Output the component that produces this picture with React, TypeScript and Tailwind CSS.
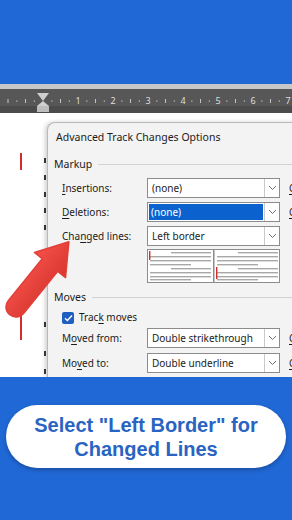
import React from "react";

const ui = { fontFamily: '"Noto Sans", "Open Sans", sans-serif' };
const pill = { fontFamily: '"Liberation Sans", Arial, sans-serif' };

function Chevron() {
  return (
    <svg width="9" height="6" viewBox="0 0 9 6">
      <path d="M1 1 L4.5 4.5 L8 1" fill="none" stroke="#6f6f6f" strokeWidth="1" />
    </svg>
  );
}

function Select({ value, active }: { value: string; active?: boolean }) {
  return (
    <div className="flex h-[20px] w-[133px] shrink-0 items-stretch border border-[#8c8c8c] bg-white">
      <div className="flex flex-1 items-stretch p-[1px]">
        <span
          className={
            active
              ? "flex w-full items-center bg-[#0b62cf] pl-[2px] text-white"
              : "flex items-center pl-[3px] text-[#1b1b1b]"
          }
        >
          {value}
        </span>
      </div>
      <div className="flex w-[15px] items-center justify-center border-l border-[#c9c9c9]">
        <Chevron />
      </div>
    </div>
  );
}

function Label({ pre, u, post }: { pre: string; u: string; post: string }) {
  return (
    <span className="w-[85px] shrink-0 text-[#1b1b1b]">
      {pre}
      <span className="underline underline-offset-2">{u}</span>
      {post}
    </span>
  );
}

function Row(props: { pre: string; u: string; post: string; value: string; active?: boolean; color?: boolean }) {
  return (
    <div className="flex h-[20px] items-center pl-[14px]">
      <Label pre={props.pre} u={props.u} post={props.post} />
      <Select value={props.value} active={props.active} />
      {props.color && (
        <span className="ml-[9px] text-[#1b1b1b]">
          <span className="underline underline-offset-2">C</span>olor:
        </span>
      )}
    </div>
  );
}

function Group({ title }: { title: string }) {
  return (
    <div className="flex h-[24px] items-center gap-[6px] pl-[6px]">
      <span className="text-[10.5px] text-[#1b1b1b]">{title}</span>
      <div className="mt-[-2px] h-px flex-1 bg-[#d2d2d2]" />
    </div>
  );
}

function Ruler() {
  const marks = [];
  for (let k = -4; k <= 28; k++) {
    const x = 43 + 8.75 * k;
    if (k === 0) continue;
    const m = ((k % 4) + 4) % 4;
    if (m === 0 && k > 0) {
      marks.push(
        <text key={k} x={x} y={15} fontSize="9" textAnchor="middle" fill="#dedede" style={ui}>
          {k / 4}
        </text>
      );
    } else if (m === 0 || m === 2) {
      marks.push(<rect key={k} x={x - 0.5} y={10} width={1} height={4} fill="#c4c4c4" />);
    } else {
      marks.push(<rect key={k} x={x - 0.5} y={11.5} width={1.2} height={1.2} fill="#c4c4c4" />);
    }
  }
  return (
    <svg width="292" height="24" viewBox="0 0 292 24" className="block">
      <rect width="292" height="24" fill="#575757" />
      <rect y="17" width="292" height="7" fill="#4b4b4b" />
      {marks}
      <path d="M37 4 H49 L43 12 Z" fill="#cfcfcf" />
      <path d="M43 12 L49 17 H37 Z" fill="#cfcfcf" />
      <rect x="37" y="17" width="12" height="6" fill="#bdbdbd" />
    </svg>
  );
}

function Margin() {
  const frags = [45, 62, 79, 95, 112, 209, 238, 256];
  return (
    <svg width="47" height="264" viewBox="0 0 47 264" className="block shrink-0">
      <rect x="20" y="40" width="2" height="17" fill="#d22c2c" />
      <rect x="20" y="177" width="2" height="50" fill="#d22c2c" />
      {frags.map((y) => (
        <rect key={y} x="44" y={y} width="2" height="5" fill="#3a3a3a" />
      ))}
    </svg>
  );
}

function Preview() {
  const line = (x1: number, x2: number, y: number, k: string) => (
    <rect key={k} x={x1} y={y} width={x2 - x1} height={1.4} fill="#a8a8a8" />
  );
  const pane = (ox: number, barTop: boolean) => (
    <g transform={`translate(${ox},0)`}>
      {line(24, 64, 3, "a")}
      {line(3, 64, 7, "b")}
      {line(3, 64, 11, "c")}
      {line(3, 44, 15, "d")}
      {line(24, 64, 19, "e")}
      {line(3, 64, 23, "f")}
      {line(3, 64, 27, "g")}
      {line(3, 44, 30, "h")}
      <rect x="2" y={barTop ? 2 : 18} width="1.4" height={barTop ? 9 : 12} fill="#d22c2c" />
    </g>
  );
  return (
    <svg width="133" height="34" viewBox="0 0 133 34" className="block">
      <rect x="0.5" y="0.5" width="132" height="33" fill="#ffffff" stroke="#8c8c8c" />
      <rect x="66" y="0.5" width="1.5" height="33" fill="#8c8c8c" />
      {pane(0, true)}
      {pane(67, false)}
    </svg>
  );
}

function Arrow() {
  return (
    <svg width="292" height="264" viewBox="0 0 292 264" className="pointer-events-none absolute left-0 top-0">
      <defs>
        <linearGradient id="ar" x1="0" y1="0" x2="0" y2="1">
          <stop offset="0" stopColor="#f4514a" />
          <stop offset="1" stopColor="#d9352f" />
        </linearGradient>
      </defs>
      <g transform="translate(16,194) rotate(-51)">
        <path
          d="M0 -10 L54 -10 L54 -20 L84 0 L54 20 L54 10 L0 10 A10 10 0 0 1 0 -10 Z"
          fill="url(#ar)"
          stroke="#e23f39"
          strokeWidth="1.5"
          strokeLinejoin="round"
        />
      </g>
    </svg>
  );
}

function Dialog() {
  return (
    <div
      className="mt-[9px] w-[270px] shrink-0 rounded-tl-[8px] border-l border-t border-[#b9b9b9] bg-[#f3f3f3] text-[10px] shadow-[-2px_0_4px_rgba(0,0,0,0.18)]"
      style={ui}
    >
      <div className="flex h-[30px] items-center pl-[8px] text-[10.5px] text-[#1b1b1b]">
        Advanced Track Changes Options
      </div>
      <Group title="Markup" />
      <div className="mt-[1px] flex flex-col gap-[4px]">
        <Row pre="" u="I" post="nsertions:" value="(none)" color />
        <Row pre="" u="D" post="eletions:" value="(none)" active color />
        <Row pre="Cha" u="n" post="ged lines:" value="Left border" />
      </div>
      <div className="mt-[3px] pl-[99px]">
        <Preview />
      </div>
      <div className="mt-[3px]">
        <Group title="Moves" />
      </div>
      <div className="flex h-[15px] items-center gap-[5px] pl-[14px]">
        <span className="flex h-[12px] w-[12px] items-center justify-center rounded-[2px] bg-[#1f5fbf]">
          <svg width="9" height="8" viewBox="0 0 9 8">
            <path d="M1 4.2 L3.4 6.5 L8 1.5" fill="none" stroke="#ffffff" strokeWidth="1.4" />
          </svg>
        </span>
        <span className="text-[#1b1b1b]">
          Trac<span className="underline underline-offset-2">k</span> moves
        </span>
      </div>
      <div className="mt-[3px] flex flex-col gap-[5px]">
        <Row pre="M" u="o" post="ved from:" value="Double strikethrough" color />
        <Row pre="Mo" u="v" post="ed to:" value="Double underline" color />
      </div>
    </div>
  );
}

export default function App() {
  return (
    <div className="flex h-[520px] w-[292px] flex-col overflow-hidden bg-[#2068d6]">
      <div className="h-[84px] shrink-0 bg-[#2068d6]" />
      <div className="h-[5px] shrink-0 bg-[#c8c8c8]" />
      <Ruler />
      <div className="relative flex h-[264px] shrink-0 overflow-hidden bg-white">
        <Margin />
        <Dialog />
        <Arrow />
      </div>
      <div className="flex flex-1 flex-col items-center bg-[#2068d6] pt-[28px]">
        <div
          className="flex h-[63px] w-[280px] flex-col items-center justify-center rounded-full bg-white text-center text-[20px] font-bold leading-[24px] text-[#2a64c2] shadow-[0_2px_4px_rgba(0,0,0,0.25)]"
          style={pill}
        >
          <span>Select "Left Border" for</span>
          <span>Changed Lines</span>
        </div>
      </div>
    </div>
  );
}
